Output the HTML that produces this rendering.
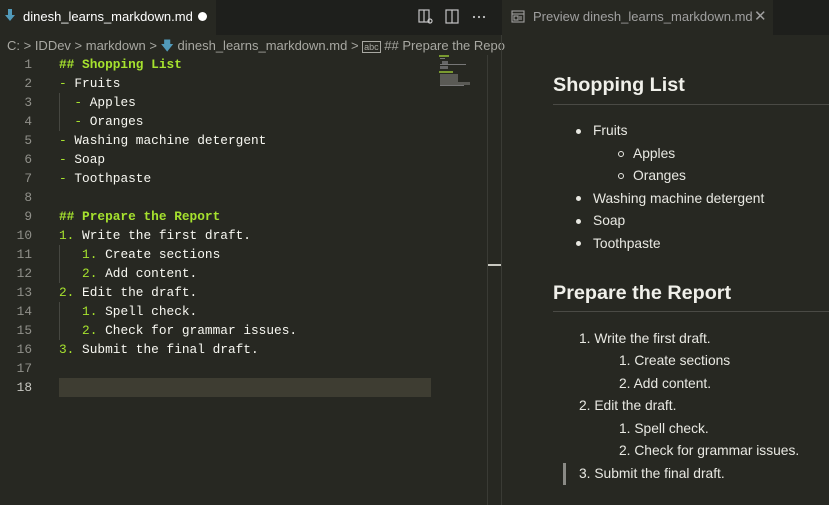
<!DOCTYPE html>
<html><head><meta charset="utf-8"><style>
*{margin:0;padding:0;box-sizing:border-box}
body{width:829px;height:505px;background:#272822;overflow:hidden;position:relative;font-family:"Liberation Sans",sans-serif}
.a{position:absolute;white-space:pre}
.mono{font-family:"Liberation Mono",monospace;font-size:12.8px;color:#f8f8f2}
.g{color:#a6e22e}
.b{font-weight:bold}
.ln{font-family:"Liberation Mono",monospace;font-size:12.8px;color:#90908a;width:32px;text-align:right}
.p{font-size:13.8px;color:#e8e8e2}
.h{font-size:19.8px;font-weight:bold;color:#f0f0ea}
.dot{position:absolute;width:5px;height:5px;border-radius:50%;background:#e8e8e2}
.circ{position:absolute;width:6px;height:6px;border-radius:50%;border:1px solid #e8e8e2}
</style></head><body>
<div class="a" style="left:0;top:0;width:829px;height:35px;background:#1e1f1c"></div>
<div class="a" style="left:0;top:0;width:216px;height:35px;background:#272822"></div>
<div class="a" style="left:502px;top:0;width:271px;height:35px;background:#272822"></div>
<svg class="a" style="left:5px;top:9px" width="12" height="14" viewBox="0 0 12 14"><path d="M3 0h4v6h3L5 12 0 6h3z" fill="#519aba"/></svg>
<div class="a" style="left:23px;top:9px;font-size:13px;color:#fff">dinesh_learns_markdown.md</div>
<div class="a" style="left:198px;top:12px;width:9px;height:9px;border-radius:50%;background:#fff"></div>
<svg class="a" style="left:418px;top:8px" width="80" height="18" viewBox="0 0 80 18">
<g fill="none" stroke="#c5c5c5" stroke-width="1.2"><rect x="1" y="2" width="10" height="12"/><line x1="6" y1="2" x2="6" y2="14"/><circle cx="12" cy="13" r="2"/>
<rect x="28" y="2" width="12" height="13"/><line x1="34" y1="2" x2="34" y2="15"/></g>
<g fill="#c5c5c5"><circle cx="56" cy="9" r="1.1"/><circle cx="61" cy="9" r="1.1"/><circle cx="66" cy="9" r="1.1"/></g></svg>
<svg class="a" style="left:511px;top:10px" width="14" height="13" viewBox="0 0 14 13"><g fill="none" stroke="#a0a0a0" stroke-width="1.1"><rect x="1" y="1" width="12" height="11"/><line x1="1" y1="4" x2="13" y2="4"/><rect x="3" y="6" width="4" height="4"/><line x1="8" y1="7" x2="11" y2="7"/><line x1="8" y1="9" x2="11" y2="9"/></g></svg>
<div class="a" style="left:533px;top:9px;font-size:13px;color:#a0a0a0">Preview dinesh_learns_markdown.md</div>
<div class="a" style="left:754px;top:7px;font-size:15px;color:#a0a0a0">✕</div>
<div class="a" style="left:7px;top:37px;font-size:13px;color:#a8a8a2">C: &gt; IDDev &gt; markdown &gt; <span style="color:#519aba">🡇</span> dinesh_learns_markdown.md &gt; <span style="font-size:9px;border:1px solid #a8a8a2;padding:0 1px">abc</span> ## Prepare the Repo</div>
<div class="a" style="left:501px;top:35px;width:1px;height:470px;background:#3a3b35"></div>
<div class="a" style="left:501px;top:0;width:1px;height:35px;background:#1e1f1c"></div>
<div class="a" style="left:487px;top:55px;width:1px;height:450px;background:#3a3b35"></div>
<div class="a" style="left:488px;top:264px;width:13px;height:2px;background:#c8c8c0"></div>
<div class="a" style="left:59px;top:378px;width:372px;height:19px;background:#3e3d32"></div>
<div class="a" style="left:59px;top:93px;width:1px;height:38px;background:#464741"></div>
<div class="a" style="left:59px;top:245px;width:1px;height:38px;background:#464741"></div>
<div class="a" style="left:59px;top:302px;width:1px;height:38px;background:#464741"></div>
<div class="a ln" style="left:0;top:55px;line-height:19px">1
2
3
4
5
6
7
8
9
10
11
12
13
14
15
16
17
<span style="color:#c8c8c2">18</span></div>
<div class="a mono" style="left:59px;top:55px;line-height:19px"><span class="g b">## Shopping List</span>
<span class="g">-</span> Fruits
  <span class="g">-</span> Apples
  <span class="g">-</span> Oranges
<span class="g">-</span> Washing machine detergent
<span class="g">-</span> Soap
<span class="g">-</span> Toothpaste

<span class="g b">## Prepare the Report</span>
<span class="g">1.</span> Write the first draft.
   <span class="g">1.</span> Create sections
   <span class="g">2.</span> Add content.
<span class="g">2.</span> Edit the draft.
   <span class="g">1.</span> Spell check.
   <span class="g">2.</span> Check for grammar issues.
<span class="g">3.</span> Submit the final draft.</div>
<div class="a" style="left:439px;top:55px;width:10px;height:2px;background:#7a9a30"></div>
<div class="a" style="left:440px;top:58px;width:5px;height:1px;background:#777"></div>
<div class="a" style="left:442px;top:61px;width:6px;height:4px;background:#666"></div>
<div class="a" style="left:440px;top:64px;width:26px;height:1px;background:#777"></div>
<div class="a" style="left:440px;top:66px;width:8px;height:3px;background:#666"></div>
<div class="a" style="left:439px;top:71px;width:14px;height:2px;background:#7a9a30"></div>
<div class="a" style="left:440px;top:74px;width:18px;height:8px;background:#5a5a55"></div>
<div class="a" style="left:440px;top:82px;width:30px;height:3px;background:#5a5a55"></div>
<div class="a" style="left:440px;top:85px;width:24px;height:1px;background:#777"></div>
<div class="a h" style="left:553px;top:74px">Shopping List</div>
<div class="a" style="left:553px;top:104px;width:276px;height:1px;background:#4a4a45"></div>
<div class="dot" style="left:576px;top:129px"></div><div class="a p" style="left:593px;top:123px">Fruits</div>
<div class="circ" style="left:618px;top:151px"></div><div class="a p" style="left:633px;top:146px">Apples</div>
<div class="circ" style="left:618px;top:173px"></div><div class="a p" style="left:633px;top:168px">Oranges</div>
<div class="dot" style="left:576px;top:196px"></div><div class="a p" style="left:593px;top:191px">Washing machine detergent</div>
<div class="dot" style="left:576px;top:219px"></div><div class="a p" style="left:593px;top:213px">Soap</div>
<div class="dot" style="left:576px;top:241px"></div><div class="a p" style="left:593px;top:236px">Toothpaste</div>
<div class="a h" style="left:553px;top:282px">Prepare the Report</div>
<div class="a" style="left:553px;top:311px;width:276px;height:1px;background:#4a4a45"></div>
<div class="a p" style="left:579px;top:331px">1. Write the first draft.</div>
<div class="a p" style="left:619px;top:353px">1. Create sections</div>
<div class="a p" style="left:619px;top:376px">2. Add content.</div>
<div class="a p" style="left:579px;top:398px">2. Edit the draft.</div>
<div class="a p" style="left:619px;top:421px">1. Spell check.</div>
<div class="a p" style="left:619px;top:443px">2. Check for grammar issues.</div>
<div class="a" style="left:563px;top:463px;width:3px;height:22px;background:#8a8a85"></div>
<div class="a p" style="left:579px;top:466px">3. Submit the final draft.</div>
</body></html>
